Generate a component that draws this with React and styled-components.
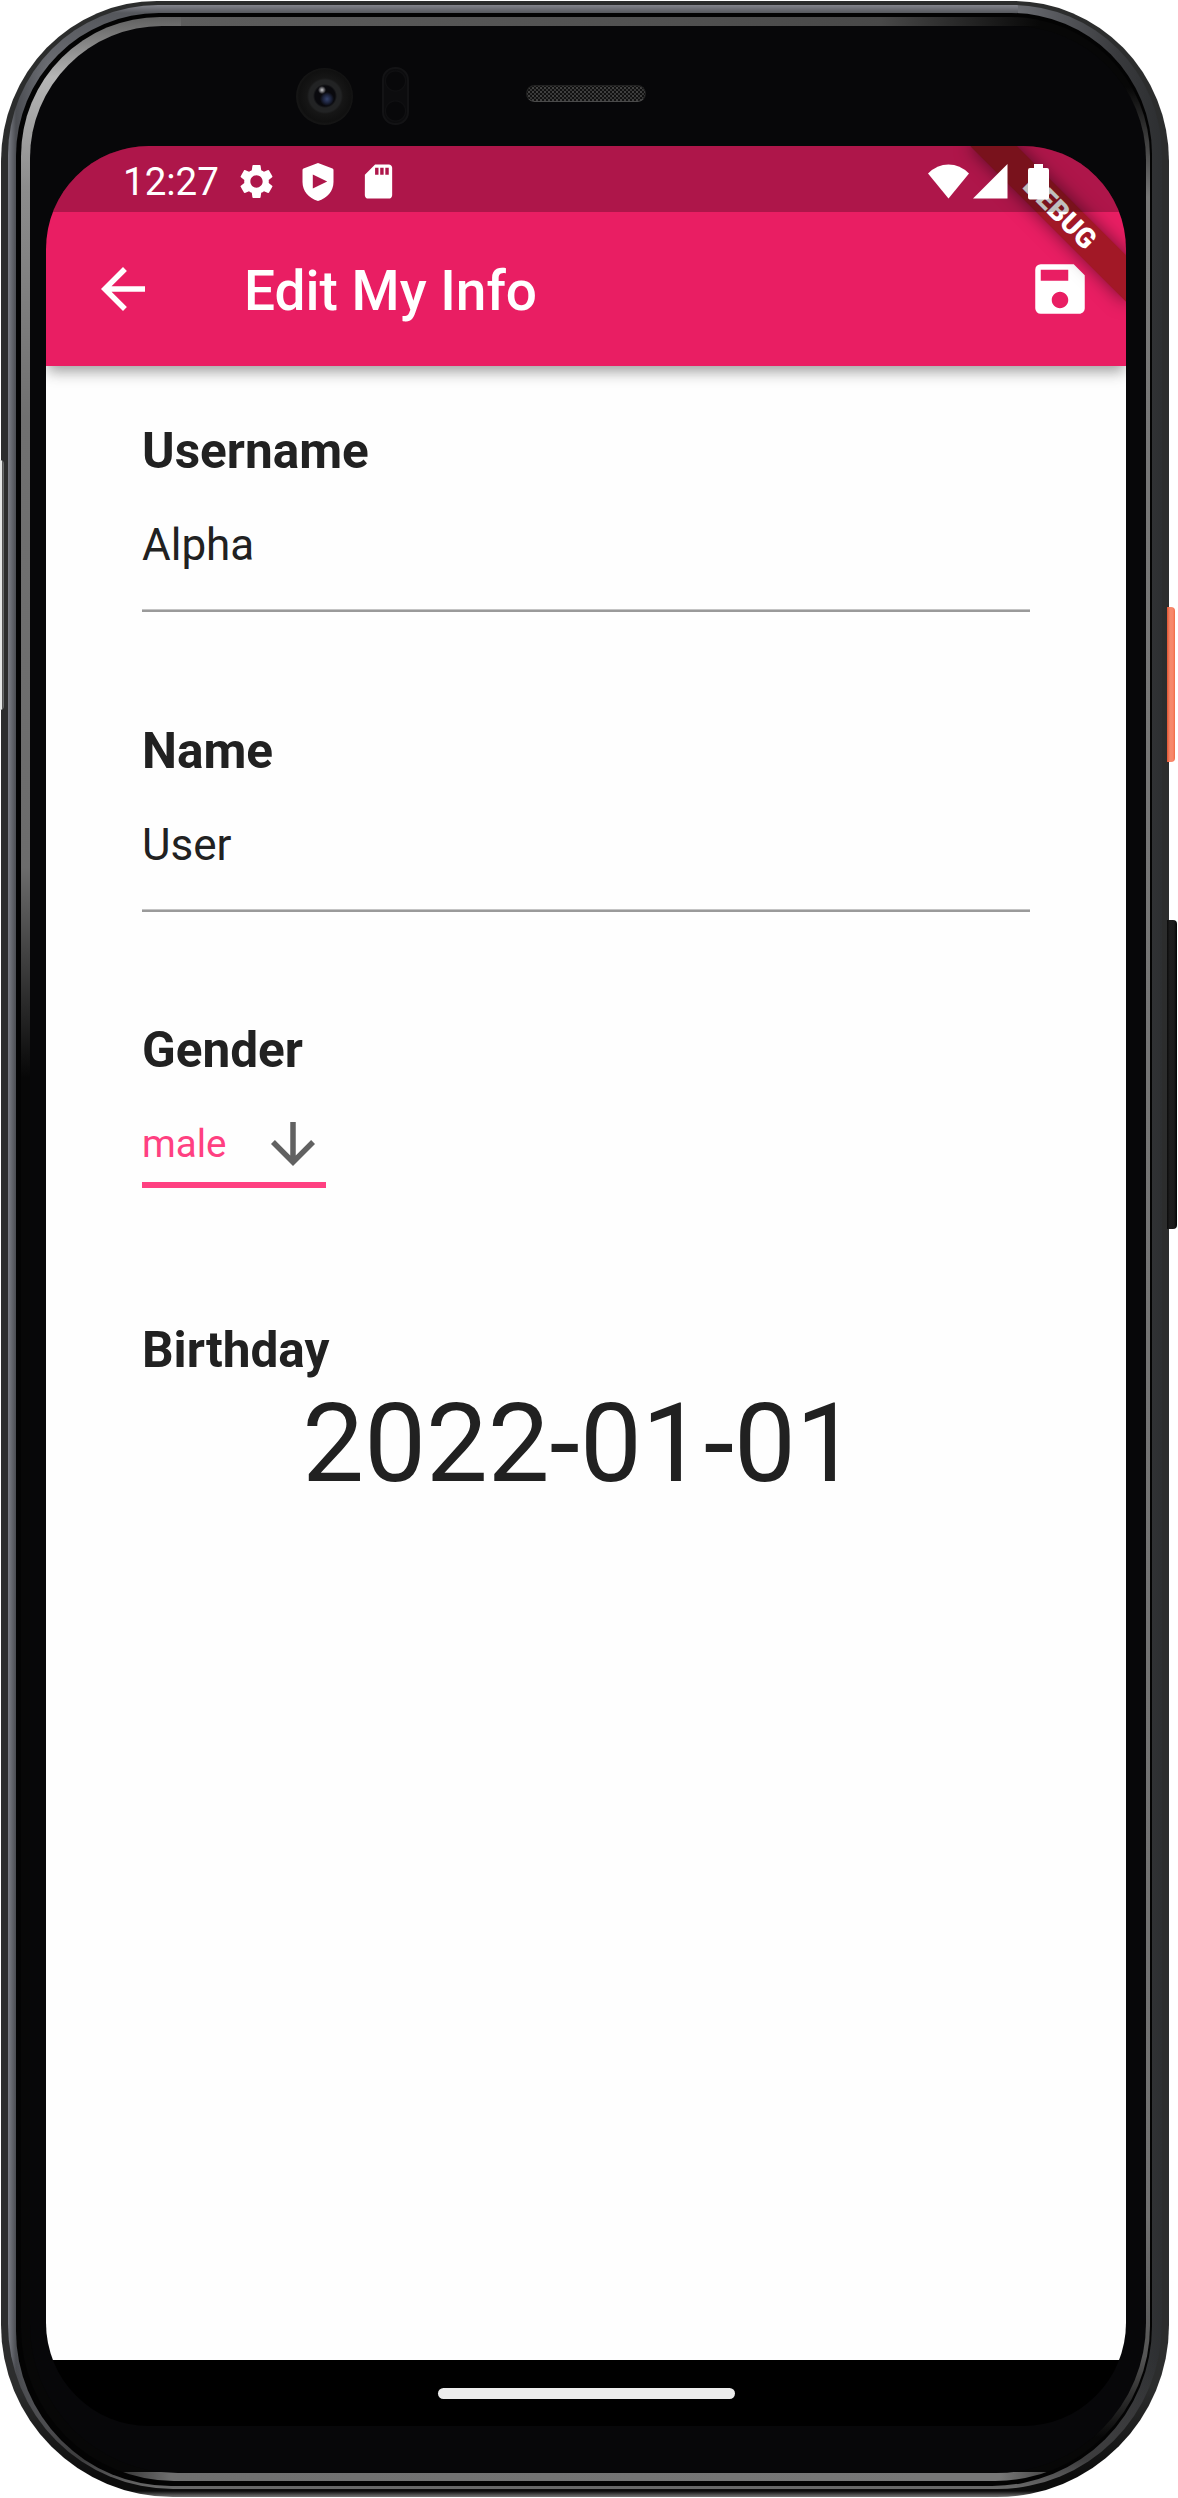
import React from "react";
import styled, { createGlobalStyle } from "styled-components";
import { MdArrowBack, MdArrowDownward, MdSave, MdSettings, MdSdCard } from "react-icons/md";

const GlobalStyle = createGlobalStyle`
  *, *::before, *::after { box-sizing: border-box; }
  body {
    margin: 0;
    background: #fff;
    font-family: Roboto, "Liberation Sans", sans-serif;
  }
  svg { display: block; flex: none; }
`;

/* ---------- device ---------- */

const Stage = styled.div`
  position: relative;
  width: 1178px;
  height: 2498px;
  padding: 1px 9px 1px 1px;
  overflow: hidden;
`;

const Shell = styled.div`
  height: 100%;
  padding: 4px 7px 8px 7px;
  border-radius: 156px 156px 172px 172px / 160px 160px 172px 172px;
  background:
    linear-gradient(to bottom, transparent calc(100% - 6px), #777 100%),
    linear-gradient(to bottom, transparent calc(100% - 110px), #0c0c0c calc(100% - 20px)),
    #2c2d2d;
`;

const Rim = styled.div`
  height: 100%;
  padding: 8px 10px 3px 8px;
  border-radius: 150px 150px 165px 165px;
  background:
    linear-gradient(to bottom, transparent calc(100% - 130px), #3c3c3d calc(100% - 30px), #6a6a6a 100%),
    linear-gradient(to bottom, #83848c 0, #55575c 8px, transparent 70px) 0 0 / 1010px 100% no-repeat,
    linear-gradient(to right, #7b7e86 0, #4b4d52 8px, #6e7076 40px, #6e7076 1000px, #393a3d 1110px, #2d2f31 100%);
`;

const Groove = styled.div`
  height: 100%;
  padding: 4px 2px 5px 5px;
  border-radius: 143px 141px 160px 155px;
  background: #030303;
`;

const Glint = styled.div`
  height: 100%;
  padding: 9px 4px 8px 9px;
  border-radius: 139px 139px 155px 153px;
  background:
    linear-gradient(to right, transparent 60px, #6f6f6f 150px, #777 900px, #777 980px, transparent 1090px) 0 100% / 100% 9px no-repeat,
    linear-gradient(to right, #5c5c5c 0, #505050 500px, #484848 700px, transparent 860px) 160px 0 / 100% 9px no-repeat,
    linear-gradient(to bottom, #606060 0, #b5b5b5 60px, #8c8c8c 170px, #707070 400px, #6c6c6c 850px, transparent 1060px) 0 0 / 160px 100% no-repeat,
    linear-gradient(to bottom, transparent 70px, #777 180px, #707070 2200px, #555 2340px, transparent 2420px) 100% 0 / 60px 100% no-repeat,
    #070707;
`;

const Glass = styled.div`
  position: relative;
  height: 100%;
  padding: 120px 20px 47px 16px;
  border-radius: 132px 134px 150px 148px;
  background: #070709;
`;

const SideKey = styled.div`
  position: absolute;
  left: 1167px;
  top: ${(p) => p.$top}px;
  width: ${(p) => p.$width}px;
  height: ${(p) => p.$height}px;
  border-radius: 0 4px 4px 0;
  background: ${(p) => p.$fill};
`;

const LeftKey = styled.div`
  position: absolute;
  left: 0;
  top: 460px;
  width: 4px;
  height: 250px;
  border-radius: 0 4px 4px 0;
  border-right: 1px solid #6b6e6e;
  background: linear-gradient(to right, #e6e8e7 0 2px, #555 2px);
`;

const Camera = styled.div`
  position: absolute;
  left: 266px;
  top: 42px;
  width: 57px;
  height: 57px;
  border-radius: 50%;
  background:
    radial-gradient(circle at 26px 22px, #c9c9cc 0, #6c6c70 2px, transparent 4px),
    radial-gradient(circle at 31px 31px, #35436c 0, #1c233c 4px, transparent 7px),
    radial-gradient(circle at 29px 28px, #09090d 0 10px, #222324 12px 16px, #161616 18px, #101010 26px, #151515 28px);
`;

const Sensor = styled.div`
  position: absolute;
  left: 352px;
  top: 41px;
  width: 27px;
  height: 58px;
  border-radius: 13px;
  border: 2px solid #131315;
  background:
    radial-gradient(circle at 50% 12px, #08080a 0 9px, #101012 10px, transparent 11px),
    radial-gradient(circle at 50% 42px, #08080a 0 9px, #101012 10px, transparent 11px),
    #0c0c0e;
`;

const Speaker = styled.div`
  position: absolute;
  left: 496px;
  top: 59px;
  width: 120px;
  height: 17px;
  border-radius: 9px;
  border: 1px solid #222;
  border-bottom-color: #4a4a4a;
  background:
    radial-gradient(circle, #404040 0 0.8px, transparent 1.3px) 0 0 / 4px 4px,
    radial-gradient(circle, #363636 0 0.8px, transparent 1.3px) 2px 2px / 4px 4px,
    #111;
`;

/* ---------- screen ---------- */

const Screen = styled.div`
  position: relative;
  display: flex;
  flex-direction: column;
  width: 1080px;
  height: 2280px;
  border-radius: 103px;
  overflow: hidden;
`;

const StatusBar = styled.div`
  position: relative;
  z-index: 3;
  flex: none;
  display: flex;
  align-items: center;
  justify-content: space-between;
  height: 66px;
  padding: 5px 77px 0 77px;
  background: rgba(0, 0, 0, 0.25);
  color: #fff;
`;

const StatusGroup = styled.div`
  display: flex;
  align-items: center;
  gap: ${(p) => p.$gap}px;
`;

const BatterySlot = styled.span`
  margin-left: 16px;
`;

const Clock = styled.span`
  width: 93px;
  margin-right: -4.5px;
  font-size: 38.5px;
  line-height: 44px;
  white-space: nowrap;
`;

const Header = styled.header`
  position: relative;
  z-index: 1;
  flex: none;
  height: 220px;
  margin-top: -66px;
  padding: 66px 33px 0 44px;
  display: flex;
  align-items: center;
  background: #e91e63;
  color: #fff;
  box-shadow: 0 8px 12px -3px rgba(0, 0, 0, 0.25), 0 6px 16px rgba(0, 0, 0, 0.16);
`;

const Title = styled.h1`
  flex: 1;
  margin: 4px 0 0 88px;
  font-size: 55px;
  font-weight: 500;
  line-height: 64px;
`;

const IconButton = styled.button`
  display: flex;
  padding: 0;
  border: 0;
  background: none;
  color: inherit;
`;

const DebugBanner = styled.div`
  position: absolute;
  z-index: 2;
  left: 903.9px;
  top: 49.6px;
  width: 220px;
  height: 33px;
  transform: rotate(45deg);
  background: #a21826;
  box-shadow: 0 0 18px rgba(0, 0, 0, 0.5);
  color: #fff;
  font-size: 28px;
  font-weight: 900;
  line-height: 33px;
  text-align: center;
`;

const Form = styled.main`
  flex: 1;
  display: flex;
  flex-direction: column;
  padding: 56px 96px 0;
  background: #fefefe;
  color: #212121;
`;

const Field = styled.section`
  display: flex;
  flex-direction: column;
  flex: none;
  height: 299.5px;
`;

const Label = styled.label`
  font-size: 49.5px;
  font-weight: 700;
  line-height: 58px;
`;

const TextInput = styled.div`
  display: flex;
  align-items: center;
  height: 132px;
  border-bottom: 2px solid #9a9a9a;
  box-shadow: inset 0 -1px 0 #c4c4c4;
  font-size: 44px;
  line-height: 52px;
`;

const Select = styled.div`
  display: flex;
  align-items: center;
  justify-content: space-between;
  width: 184px;
  height: 82px;
  margin-top: 27px;
  border-bottom: 6px solid #ff4081;
  color: #ff4081;
  font-size: 38.5px;
  line-height: 46px;

  svg { color: #616161; }
`;

const DateValue = styled.div`
  align-self: center;
  margin-right: 12px;
  font-size: 110px;
  line-height: 129px;
`;

const NavBar = styled.footer`
  flex: none;
  display: flex;
  align-items: center;
  justify-content: center;
  height: 66px;
  background: #000;
`;

const NavPill = styled.div`
  width: 297px;
  height: 11px;
  border-radius: 6px;
  background: #ececec;
`;

/* ---------- icons ---------- */

const PlayShield = () => (
  <svg width="32" height="38" viewBox="0 0 32 38">
    <path
      fillRule="evenodd"
      fill="currentColor"
      d="M16 0 1.5 5.6Q.5 6 .5 7.2V19c0 9 6 16 15.500 19C25.500 35 31.500 28 31.500 19V7.200Q31.500 6 30.500 5.600ZM10.800 11.500v14L25.200 18.500Z"
    />
  </svg>
);

const Wifi = () => (
  <svg width="41" height="35" viewBox="0 0 41 35">
    <path fill="currentColor" d="M0 9.500Q9 .5 20.500.5T41 9.500L20.500 34.500Z" />
  </svg>
);

const Signal = () => (
  <svg width="35" height="35" viewBox="0 0 35 35">
    <path fill="currentColor" d="M34.500 0v34.500H0Z" />
  </svg>
);

const Battery = () => (
  <svg width="21" height="36" viewBox="0 0 21 36">
    <path fill="currentColor" d="M6 0h9v4h4q2 0 2 2v27.500q0 2-2 2H2q-2 0-2-2V6q0-2 2-2h4Z" />
  </svg>
);

const fields = [
  { label: "Username", value: "Alpha" },
  { label: "Name", value: "User" },
];

export default function App() {
  return (
    <Stage>
      <GlobalStyle />
      <SideKey $top={607} $width={8} $height={155} $fill="linear-gradient(to right, #e0522f 0, #f58a6c 3px, #f9866a 6px, #ee6c45 8px)" />
      <SideKey $top={920} $width={10} $height={309} $fill="linear-gradient(to right, #0a0a0a, #1e1e1e 3px, #1c1c1c 7px, #050505)" />
      <Shell>
        <Rim>
          <Groove>
            <Glint>
              <Glass>
                <Camera />
                <Sensor />
                <Speaker />
                <Screen>
                  <StatusBar>
                    <StatusGroup $gap={24.5}>
                      <Clock>12:27</Clock>
                      <MdSettings size={41} />
                      <PlayShield />
                      <MdSdCard size={41} />
                    </StatusGroup>
                    <StatusGroup $gap={4}>
                      <Wifi />
                      <Signal />
                      <BatterySlot>
                        <Battery />
                      </BatterySlot>
                    </StatusGroup>
                  </StatusBar>
                  <Header>
                    <IconButton aria-label="Back">
                      <MdArrowBack size={66} />
                    </IconButton>
                    <Title>Edit My Info</Title>
                    <IconButton aria-label="Save">
                      <MdSave size={66} />
                    </IconButton>
                  </Header>
                  <DebugBanner>DEBUG</DebugBanner>
                  <Form>
                    {fields.map((f) => (
                      <Field key={f.label}>
                        <Label>{f.label}</Label>
                        <TextInput>{f.value}</TextInput>
                      </Field>
                    ))}
                    <Field>
                      <Label>Gender</Label>
                      <Select>
                        male
                        <MdArrowDownward size={66} />
                      </Select>
                    </Field>
                    <Field>
                      <Label>Birthday</Label>
                      <DateValue>2022-01-01</DateValue>
                    </Field>
                  </Form>
                  <NavBar>
                    <NavPill />
                  </NavBar>
                </Screen>
              </Glass>
            </Glint>
          </Groove>
        </Rim>
      </Shell>
      <LeftKey />
    </Stage>
  );
}
